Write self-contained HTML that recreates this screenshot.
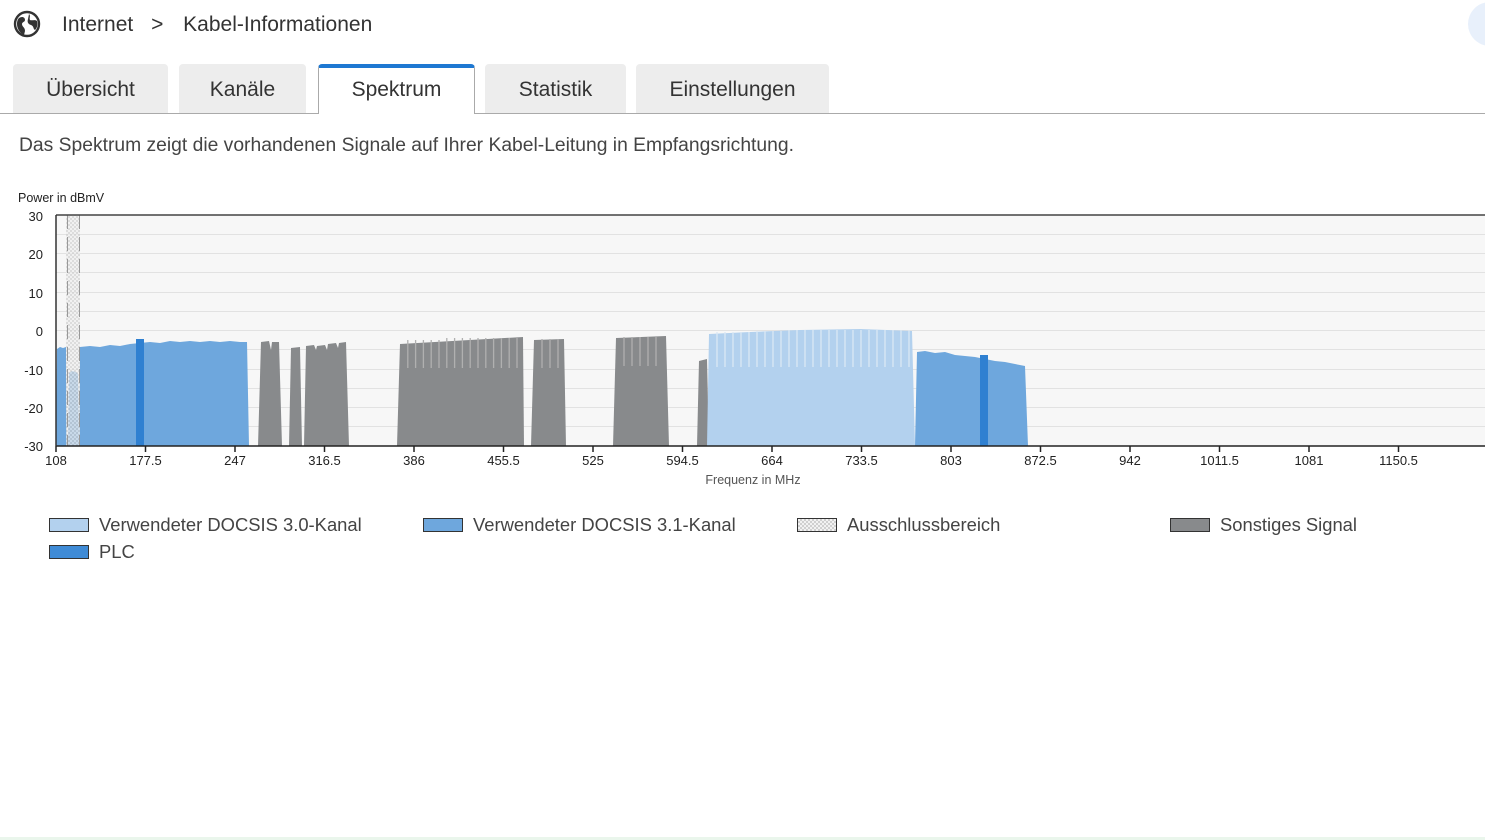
<!DOCTYPE html>
<html><head><meta charset="utf-8"><style>
*{margin:0;padding:0;box-sizing:border-box}
body{width:1485px;height:840px;background:#fff;font-family:"Liberation Sans",sans-serif;color:#333;position:relative;overflow:hidden}
.bc{position:absolute;top:13px;left:62px;font-size:21px;color:#333;white-space:nowrap}
.tab{position:absolute;top:64px;height:50px;background:#ededed;border-radius:4px 4px 0 0;font-size:21px;color:#333;text-align:center;line-height:52px}
.tab.act{background:#fff;border:1px solid #aaa;border-bottom:none;border-top:4px solid #1e78d2;line-height:46px;height:50px;z-index:2}
.line{position:absolute;top:113px;left:0;width:1485px;height:1px;background:#aaa}
.desc{position:absolute;top:135px;left:19px;font-size:19.3px;color:#444;white-space:nowrap}
.lg{position:absolute;font-size:18.4px;color:#444;white-space:nowrap}
.lg i{position:absolute;left:0;top:4px;width:40px;height:14px;border:1px solid #333}
.lg span{position:absolute;left:50px;top:0}
</style></head><body>
<svg style="position:absolute;left:13px;top:10px" width="28" height="28" viewBox="0 0 28 28">
<circle cx="14" cy="14" r="12" fill="none" stroke="#333" stroke-width="2.4"/>
<path d="M6,8 C9,6 12,7 12,10 C12,12 9,12 9,14 C9,17 12,17 12,21 L11,25 C7,23 4,19 4,14 C4,11 5,9 6,8Z" fill="#333"/>
<path d="M16,4 C18,6 16,8 17,10 C19,11 22,9 24,11 C25,15 24,18 22,20 C20,19 21,16 18,15 C15,14 14,12 15,9Z" fill="#333"/>
</svg>
<div class="bc">Internet <span style="display:inline-block;margin:0 14px 0 12px">&gt;</span> Kabel-Informationen</div>
<div style="position:absolute;left:1468px;top:2px;width:44px;height:44px;border-radius:50%;background:#e8f0fb"></div>
<div class="tab" style="left:13px;width:155px">Übersicht</div>
<div class="tab" style="left:179px;width:127px">Kanäle</div>
<div class="tab act" style="left:318px;width:157px;line-height:44px">Spektrum</div>
<div class="tab" style="left:485px;width:141px">Statistik</div>
<div class="tab" style="left:636px;width:193px">Einstellungen</div>
<div class="line"></div>
<div class="desc">Das Spektrum zeigt die vorhandenen Signale auf Ihrer Kabel-Leitung in Empfangsrichtung.</div>

<svg style="position:absolute;left:0;top:185px" width="1485" height="305" viewBox="0 185 1485 305" font-family="Liberation Sans, sans-serif">
<defs>
<pattern id="chk" width="4" height="4" patternUnits="userSpaceOnUse"><rect width="4" height="4" fill="#eee"/><rect width="2" height="2" fill="#d0d0d0"/><rect x="2" y="2" width="2" height="2" fill="#d0d0d0"/></pattern>
</defs>
<text x="18" y="202" font-size="12.5" fill="#222">Power in dBmV</text>
<rect x="56" y="215" width="1429" height="231" fill="#f7f7f7"/>
<g stroke="#e2e2e2" stroke-width="1">
<line x1="56" x2="1485" y1="234.5" y2="234.5"/><line x1="56" x2="1485" y1="253.5" y2="253.5"/>
<line x1="56" x2="1485" y1="272.5" y2="272.5"/><line x1="56" x2="1485" y1="292.5" y2="292.5"/>
<line x1="56" x2="1485" y1="311.5" y2="311.5"/><line x1="56" x2="1485" y1="330.5" y2="330.5"/>
<line x1="56" x2="1485" y1="349.5" y2="349.5"/><line x1="56" x2="1485" y1="369.5" y2="369.5"/>
<line x1="56" x2="1485" y1="388.5" y2="388.5"/><line x1="56" x2="1485" y1="407.5" y2="407.5"/>
<line x1="56" x2="1485" y1="426.5" y2="426.5"/>
</g>
<path d="M56,446 L57,349 L60,347 L63,348 L66,347 L67,446Z" fill="#6ea7dd"/>
<path d="M68,446 L69,373 L72,371 L76,372 L78,374 L79,446Z" fill="#6ea7dd"/>
<path d="M79,446 L80,347 L90,346 L100,347 L110,345 L120,346 L130,344 L140,343 L150,342 L160,343 L170,341 L180,342 L190,341 L200,342 L210,341 L220,342 L230,341 L240,342 L247,342 L249,446Z" fill="#6ea7dd"/>
<rect x="136" y="339" width="8" height="107" fill="#2f80d1"/>
<rect x="66" y="215" width="14" height="231" fill="url(#chk)" opacity="0.7"/>
<line x1="67.5" y1="215" x2="67.5" y2="446" stroke="#999" stroke-dasharray="14,8"/>
<line x1="79.5" y1="215" x2="79.5" y2="446" stroke="#999" stroke-dasharray="14,8"/>
<g fill="#888a8c">
<path d="M258,446 L261,342 L269,341 L271,350 L272,342 L279,342 L282,446Z"/>
<path d="M289,446 L291,348 L300,347 L302,446Z"/>
<path d="M304,446 L306,346 L314,345 L316,350 L317,346 L325,345 L327,350 L328,344 L336,343 L338,348 L339,343 L346,342 L349,446Z"/>
<path d="M397,446 L400,344 L523,337 L524,446Z"/>
<path d="M531,446 L534,340 L564,339 L566,446Z"/>
<path d="M613,446 L616,338 L666,336 L669,446Z"/>
<path d="M697,446 L699,361 L707,359 L709,446Z"/>
</g>
<g stroke="#b0b0b0" stroke-width="1.3">
<path d="M407.8,340V368M415.6,340V368M423.4,340V368M431.2,340V368M439,340V368M446.8,338V368M454.6,338V368M462.4,338V368M470.2,338V368M478,338V368M485.8,338V368M493.6,338V368M501.4,338V368M509.2,338V368M517,338V368"/>
<path d="M542,339V368M550,339V368M558,339V368"/>
<path d="M624,337V366M632,337V366M640,337V366M648,337V366M656,337V366"/>
</g>
<path d="M707,446 L709,334 L750,332 L800,330 L860,329 L912,331 L915,446Z" fill="#b3d1ee"/>
<g stroke="#dbe8f5" stroke-width="1.3">
<path d="M717,332V367M725,332V367M733,332V367M741,332V367M749,332V367M757,331V367M765,331V367M773,331V367M781,331V367M789,330V367M797,330V367M805,330V367M813,330V367M821,330V367M829,330V367M837,330V367M845,330V367M853,330V367M861,330V367M869,330V367M877,330V367M885,330V367M893,330V367M901,330V367M909,330V367"/>
</g>
<path d="M915,446 L917,352 L925,351 L935,353 L945,352 L955,355 L965,356 L975,357 L985,359 L995,361 L1005,362 L1015,364 L1025,366 L1028,446Z" fill="#6ea7dd"/>
<rect x="980" y="355" width="8" height="91" fill="#2f80d1"/>
<line x1="56" y1="215" x2="1485" y2="215" stroke="#444" stroke-width="1.5"/>
<line x1="56" y1="446" x2="1485" y2="446" stroke="#222" stroke-width="1.5"/>
<line x1="56" y1="215" x2="56" y2="446" stroke="#333" stroke-width="1.5"/>
<g font-size="13" fill="#222" text-anchor="end">
<text x="43" y="221">30</text><text x="43" y="259">20</text><text x="43" y="298">10</text><text x="43" y="336">0</text>
<text x="43" y="375">-10</text><text x="43" y="413">-20</text><text x="43" y="451">-30</text>
</g>
<g stroke="#222" stroke-width="1.5">
<path d="M56,446v6M145.5,446v6M235,446v6M324.5,446v6M414,446v6M503.5,446v6M593,446v6M682.5,446v6M772,446v6M861.5,446v6M951,446v6M1040.5,446v6M1130,446v6M1219.5,446v6M1309,446v6M1398.5,446v6"/>
</g>
<g font-size="13" fill="#222" text-anchor="middle">
<text x="56" y="465">108</text><text x="145.5" y="465">177.5</text><text x="235" y="465">247</text><text x="324.5" y="465">316.5</text>
<text x="414" y="465">386</text><text x="503.5" y="465">455.5</text><text x="593" y="465">525</text><text x="682.5" y="465">594.5</text>
<text x="772" y="465">664</text><text x="861.5" y="465">733.5</text><text x="951" y="465">803</text><text x="1040.5" y="465">872.5</text>
<text x="1130" y="465">942</text><text x="1219.5" y="465">1011.5</text><text x="1309" y="465">1081</text><text x="1398.5" y="465">1150.5</text>
<text x="753" y="484" fill="#555" font-size="12.5">Frequenz in MHz</text>
</g>
</svg>

<div class="lg" style="left:49px;top:514px"><i style="background:#b3d1ee"></i><span>Verwendeter DOCSIS 3.0-Kanal</span></div>
<div class="lg" style="left:423px;top:514px"><i style="background:#6ea7dd"></i><span>Verwendeter DOCSIS 3.1-Kanal</span></div>
<div class="lg" style="left:797px;top:514px"><i style="background:repeating-conic-gradient(#d0d0d0 0 25%,#f2f2f2 0 50%) 0 0/4px 4px"></i><span>Ausschlussbereich</span></div>
<div class="lg" style="left:1170px;top:514px"><i style="background:#888a8c"></i><span>Sonstiges Signal</span></div>
<div class="lg" style="left:49px;top:541px"><i style="background:#3f8bd6"></i><span>PLC</span></div>
<div style="position:absolute;left:0;top:837px;width:1485px;height:3px;background:#eaf6ec"></div>
</body></html>
